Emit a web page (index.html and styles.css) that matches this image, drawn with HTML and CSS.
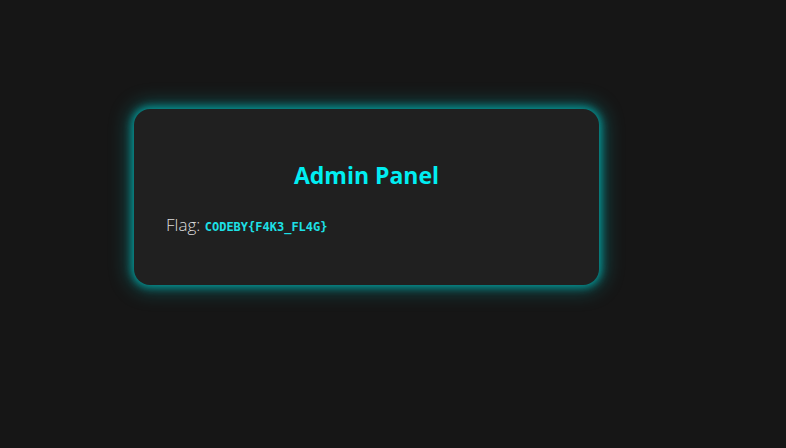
FILE: index.html
```html
<!DOCTYPE html>
<html>
<head>
<meta charset="utf-8">
<link rel="stylesheet" href="styles.css">
</head>
<body>
<div class="wrap">
  <div class="card">
    <h1 class="title">Admin Panel</h1>
    <p class="flag">Flag: <code class="code">CODEBY{F4K3_FL4G}</code></p>
  </div>
</div>
</body>
</html>
```
FILE: styles.css
```css
html, body {
  margin: 0;
  padding: 0;
  background: #161616;
  height: 100%;
}
body {
  font-family: "Open Sans", "Noto Sans", sans-serif;
}
.wrap {
  padding: 109px 0 0 134px;
}
.card {
  box-sizing: border-box;
  width: 465px;
  height: 176px;
  background: #202020;
  border-radius: 16px;
  box-shadow: 0 0 8px 2px rgba(0, 185, 185, 0.75), 0 0 20px 5px rgba(0, 170, 170, 0.4);
  padding: 50px 32px 0 32px;
}
.title {
  margin: 0;
  text-align: center;
  color: #00eef2;
  font-size: 23px;
  font-weight: 700;
  line-height: 32px;
  letter-spacing: 0;
}
.flag {
  margin: 22px 0 0 0;
  color: #dcdcdc;
  font-size: 17px;
  font-weight: 300;
  line-height: 24px;
}
.code {
  font-family: "DejaVu Sans Mono", monospace;
  font-weight: 700;
  font-size: 12px;
  color: #1de0e6;
  letter-spacing: 0;
}
```
